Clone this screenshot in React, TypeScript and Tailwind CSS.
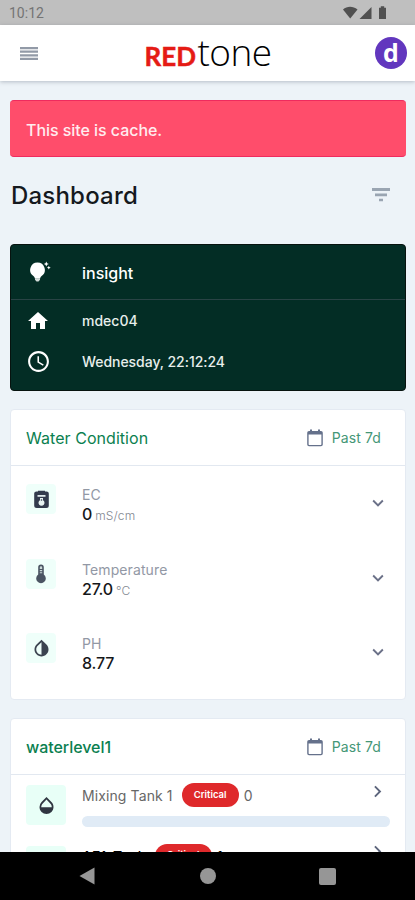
import React from 'react';
import {
    MdAccessTime,
    MdHome,
    MdInvertColors,
    MdKeyboardArrowDown,
    MdKeyboardArrowRight,
    MdOpacity,
} from 'react-icons/md';

interface Reading {
    id: string;
    label: string;
    value: string;
    unit?: string;
    icon: React.ReactNode;
}

interface Tank {
    id: string;
    name: string;
    status: string;
    level: string;
    dark?: boolean;
}

const CanisterIcon = () => (
    <svg viewBox="0 0 15 19" className="w-[15px] h-[19px]">
        <path d="M2.500 1.500H4V.8h7v.7h1.500A2.300 2.300 0 0 1 14.800 4v11.500a2.500 2.500 0 0 1-2.500 2.500H2.700A2.500 2.500 0 0 1 .2 15.500V4a2.300 2.300 0 0 1 2.300-2.500Z" fill="#333b4d" />
        <path d="M3.500 5h8v1.800h-8z" fill="#dfe9ea" />
        <path d="M6 8h3v2.200a3 3 0 1 1-3 0z" fill="#e8f3f2" />
        <circle cx="7.500" cy="10" r=".8" fill="#333b4d" />
    </svg>
);

const ThermometerIcon = () => (
    <svg viewBox="0 0 12 20" className="w-3 h-5">
        <path d="M3.200 10.500V3.300a2.800 2.800 0 0 1 5.600 0v7.200a4.800 4.800 0 1 1-5.600 0Z" fill="#4b5563" />
        <path d="M4.800 3.500a1.200 1.200 0 0 1 2.400 0V5H4.800zM4.800 6h2.400v1.200H4.800zM4.800 8.200h2.400v1H4.800z" fill="#c9d8d6" />
    </svg>
);

const BulbIcon = () => (
    <svg viewBox="0 0 22 22" className="w-[22px] h-[22px]" fill="#fff">
        <path d="M8.500 1.500A7.400 7.400 0 0 0 4.400 15c.8.600 1.300 1.400 1.500 2.500h5.200c.2-1.100.7-1.900 1.500-2.500A7.400 7.400 0 0 0 8.500 1.500Z" />
        <path d="M6 17.300h5v1.400L9.500 20.500h-2L6 18.700z" fill="#d5dddb" />
        <path d="m17.300.5.8 1.700 1.700.8-1.700.8-.8 1.700-.8-1.700-1.700-.8 1.700-.8zM19.800 4.800l.6 1.300 1.300.6-1.300.6-.6 1.300-.6-1.300-1.300-.6 1.300-.6z" />
    </svg>
);

const CalendarIcon = () => (
    <svg viewBox="0 0 16 18" className="w-4 h-[18px]">
        <path d="M2 2h1V.5h2V2h6V.5h2V2h1a1.800 1.800 0 0 1 1.800 1.800v11.700a1.800 1.800 0 0 1-1.800 1.800H2A1.800 1.800 0 0 1 .2 15.500V3.800A1.800 1.800 0 0 1 2 2Zm-.4 3.500v9.800c0 .4.200.6.600.6h11.600c.4 0 .6-.2.600-.6V5.500z" fill="#65718b" fillRule="evenodd" />
    </svg>
);

const READINGS: Reading[] = [
    { id: 'ec', label: 'EC', value: '0', unit: 'mS/cm', icon: <CanisterIcon /> },
    { id: 'temperature', label: 'Temperature', value: '27.0', unit: '°C', icon: <ThermometerIcon /> },
    { id: 'ph', label: 'PH', value: '8.77', icon: <MdInvertColors className="w-[21px] h-[21px] text-[#3b4350]" /> },
];

const TANKS: Tank[] = [
    { id: 'mixing-1', name: 'Mixing Tank 1', status: 'Critical', level: '0' },
    { id: 'afa', name: 'AFA Tank', status: 'Critical', level: '1', dark: true },
];

const StatusBar = () => (
    <div className="h-[25px] shrink-0 bg-[#bfbfbf] flex items-center justify-between pl-[9px] pr-[27px]">
        <span className="font-['Roboto'] text-sm text-[#747474] pt-px">10:12</span>
        <svg viewBox="0 0 45 14" className="w-[45px] h-3.5" fill="#505050">
            <path d="M0 3.500C4-.2 10-.2 14.500 3.500L7.200 12.500z" />
            <path d="M28.500 1v12H16.500z" />
            <path d="M36 1.800h1.800V.3h3.400v1.500H43V13h-7z" />
        </svg>
    </div>
);

const Header = () => (
    <header className="h-14 shrink-0 bg-white shadow-[0_1px_4px_rgba(80,90,105,0.35)] relative z-10 flex items-center justify-between pl-5 pr-2">
        <svg viewBox="0 0 18 13" className="w-[18px] h-[13px]" fill="#929aa7">
            <path d="M0 0h18v2.200H0zM0 3.600h18v2.200H0zM0 7.200h18v2.200H0zM0 10.800h18V13H0z" />
        </svg>
        <div className="flex items-baseline leading-none pl-[3px] pb-[3px]">
            <span className="font-['Lato'] font-bold text-[26px] w-[53px] text-[#e51b14] [-webkit-text-stroke:0.5px_#e51b14]">RED</span>
            <span className="font-['Open_Sans'] font-light text-[37px] leading-none tracking-[-0.6px] text-black">tone</span>
        </div>
        <div className="w-8 h-8 rounded-full bg-[#6237be] flex items-center justify-center">
            <span className="font-['Open_Sans'] font-bold text-[25px] leading-none text-white pb-px">d</span>
        </div>
    </header>
);

const CardHeader = ({ title, bold }: { title: string; bold?: boolean }) => (
    <div className="h-14 border-b border-[#e2e8f0] flex items-center justify-between pl-[15px] pr-6">
        <h2 className={`text-base text-[#0b7f50] ${bold ? 'font-medium tracking-[-0.05px]' : 'tracking-[0.05px]'}`}>{title}</h2>
        <div className="flex items-center gap-[9px]">
            <CalendarIcon />
            <span className="text-sm tracking-[0.1px] text-[#459777]">Past 7d</span>
        </div>
    </div>
);

const InsightCard = () => (
    <section className="h-[147px] mt-[31px] rounded bg-[#032d25] border border-[#07130f] text-white">
        <div className="h-[55px] border-b border-[#294345] flex items-center pl-[18px]">
            <BulbIcon />
            <span className="pl-[31px] pt-0.5 text-base font-medium">insight</span>
        </div>
        <div className="h-[41px] flex items-center pl-[15px]">
            <MdHome className="w-6 h-6" />
            <span className="pl-8 pt-px text-sm font-medium text-[#e8efec]">mdec04</span>
        </div>
        <div className="h-10 flex items-center pl-[15px]">
            <MdAccessTime className="w-[25px] h-[25px] -mx-[0.5px]" />
            <span className="pl-8 pt-px text-sm font-medium tracking-[-0.05px] text-[#e8efec]">Wednesday, 22:12:24</span>
        </div>
    </section>
);

const WaterConditionCard = () => (
    <section className="h-[291px] mt-[18px] rounded bg-white border border-[#e4eaf2]">
        <CardHeader title="Water Condition" />
        <div className="pt-[18px]">
            {READINGS.map((reading) => (
                <div key={reading.id} className="h-[74.5px] flex items-start pl-[15px] pr-4">
                    <div className="w-[30px] h-[30px] rounded-sm bg-[#effffa] flex items-center justify-center shrink-0">
                        {reading.icon}
                    </div>
                    <div className="pl-[26px] pt-px grow">
                        <div className="text-sm leading-5 tracking-[0.1px] text-[#9298a5]">{reading.label}</div>
                        <div className="flex items-baseline gap-[3px] h-[19px] leading-[19px]">
                            <span className="text-base leading-[19px] font-medium tracking-[-0.2px] text-[#151719]">{reading.value}</span>
                            {reading.unit && <span className="text-xs leading-[19px] font-light tracking-[0.15px] text-[#838891]">{reading.unit}</span>}
                        </div>
                    </div>
                    <MdKeyboardArrowDown className="w-[22px] h-[22px] mt-2 text-[#6b7188]" />
                </div>
            ))}
        </div>
    </section>
);

const WaterLevelCard = () => (
    <section className="h-[240px] mt-[18px] rounded bg-white border border-[#e4eaf2]">
        <CardHeader title="waterlevel1" bold />
        <div className="pt-[7px]">
            {TANKS.map((tank) => (
                <div key={tank.id} className="h-[60.5px] flex items-start px-[15px]">
                    <div className="w-10 h-10 mt-[3px] rounded-sm bg-[#e8fff7] flex items-center justify-center shrink-0">
                        <MdOpacity className="w-[21px] h-[21px] text-[#303641]" />
                    </div>
                    <div className="ml-4 grow">
                        <div className="h-[26px] flex items-center">
                            <span className={`pt-0.5 text-sm tracking-[0.1px] ${tank.dark ? 'font-medium text-black' : 'text-[#676767]'}`}>{tank.name}</span>
                            <span className="w-[57px] h-6 ml-[9px] rounded-full bg-[#df292b] flex items-center justify-center text-[9.5px] font-semibold text-white">
                                {tank.status}
                            </span>
                            <span className={`pl-[5px] pt-0.5 text-sm ${tank.dark ? 'font-medium text-black' : 'text-[#676767]'}`}>{tank.level}</span>
                            <MdKeyboardArrowRight className="w-[23px] h-[23px] ml-auto mr-px mb-2 text-[#5d657c]" />
                        </div>
                        <div className="h-[11px] mt-2 rounded-full bg-[#e0ebf6]" />
                    </div>
                </div>
            ))}
        </div>
    </section>
);

const NavigationBar = () => (
    <nav className="h-12 shrink-0 bg-black flex items-center justify-between px-[79px]">
        <svg viewBox="0 0 16 18" className="w-4 h-[18px]" fill="#969696">
            <path d="M.5 9 15.500.5v17z" />
        </svg>
        <div className="w-4 h-4 ml-px rounded-full bg-[#969696]" />
        <div className="w-[17px] h-[17px] rounded-[2px] bg-[#969696]" />
    </nav>
);

export default function App() {
    return (
        <div className="w-full h-[900px] overflow-hidden flex flex-col bg-[#edf3f8] font-['Inter',sans-serif]">
            <StatusBar />
            <Header />
            <main className="h-[771px] min-h-0 overflow-hidden pl-2.5 pr-[9px] pt-[19px]">
                <div className="h-[57px] rounded bg-[#ff4d6b] border-y border-[#ef2b5e] flex items-center pl-4">
                    <p className="pt-0.5 text-base font-medium tracking-[-0.05px] text-[#ffecef]">This site is cache.</p>
                </div>
                <div className="h-14 flex items-center justify-between pl-px pr-4 pt-5">
                    <h1 className="pt-0.5 text-2xl font-medium tracking-[0.2px] text-[#15191e]">Dashboard</h1>
                    <svg viewBox="0 0 18 14" className="w-[18px] h-3.5" fill="#9aa5b2">
                        <path d="M0 0h18v3H0zM3 5.500h12v2.800H3zM7 10.800h4v2.500H7z" />
                    </svg>
                </div>
                <InsightCard />
                <WaterConditionCard />
                <WaterLevelCard />
            </main>
            <NavigationBar />
        </div>
    );
}
